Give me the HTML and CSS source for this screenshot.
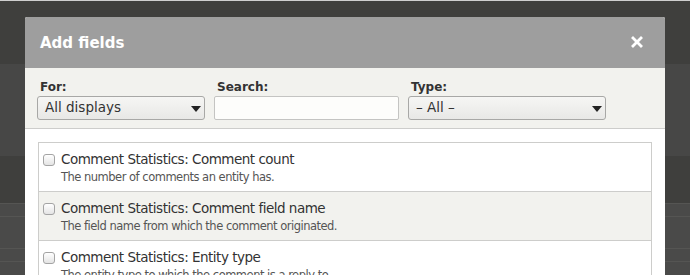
FILE: index.html
```html
<!DOCTYPE html>
<html lang="en">
<head>
  <meta charset="UTF-8" />
  <title>Add fields</title>
  <link rel="stylesheet" href="styles.css">
</head>
<body>
  <div class="page">
    <div class="band band-top"></div>
    <div class="band band-mid"></div>
    <div class="band band-low"></div>
    <div class="band band-rows">
      <div class="line"></div><div class="line"></div><div class="line"></div><div class="line"></div>
    </div>
  </div>

  <div class="dialog">
    <div class="titlebar">
      <span class="title">Add fields</span>
      <svg class="close" width="12" height="12" viewBox="0 0 12 12">
        <path d="M2 2 L10 10 M10 2 L2 10" stroke="#fff" stroke-width="2.8" stroke-linecap="square" />
      </svg>
    </div>
    <div class="filters">
      <div class="filter">
        <label>For:</label>
        <div class="select sel-for">All displays<span class="arrow"></span></div>
      </div>
      <div class="filter">
        <label>Search:</label>
        <div class="search"></div>
      </div>
      <div class="filter">
        <label>Type:</label>
        <div class="select sel-type">&ndash; All &ndash;<span class="arrow"></span></div>
      </div>
    </div>
    <div class="content">
      <div class="fields">
        <div class="row">
          <span class="check"></span>
          <div>
            <div class="name">Comment Statistics: Comment count</div>
            <div class="desc">The number of comments an entity has.</div>
          </div>
        </div>
        <div class="row even">
          <span class="check"></span>
          <div>
            <div class="name">Comment Statistics: Comment field name</div>
            <div class="desc">The field name from which the comment originated.</div>
          </div>
        </div>
        <div class="row">
          <span class="check"></span>
          <div>
            <div class="name">Comment Statistics: Entity type</div>
            <div class="desc">The entity type to which the comment is a reply to.</div>
          </div>
        </div>
      </div>
    </div>
  </div>
</body>
</html>
```

FILE: styles.css
```css
html, body { margin: 0; height: 100%; overflow: hidden; }
body {
  font-family: "DejaVu Sans", Verdana, sans-serif;
  background: #4a4a49;
  border-top: 1px solid #cfcfcf;
  position: relative;
}
.page { display: flex; flex-direction: column; }
.band-top { height: 63px; background: #3f3f3d; }
.band-mid { height: 92px; background: #474746; }
.band-low { height: 47px; background: #3f3f3d; }
.band-rows { background: #4a4a49; }
.line { height: 12px; border-top: 1px solid #555553; }
.line:nth-child(2) { height: 31px; }

.dialog {
  position: absolute;
  left: 25px; top: 16px;
  width: 640px; height: 300px;
  background: #fff;
  border-radius: 2px 2px 0 0;
}
.titlebar {
  height: 51px;
  background: #9e9e9e;
  display: flex;
  align-items: center;
  justify-content: space-between;
  padding: 0 22px 0 15px;
  color: #fff;
  border-radius: 2px 2px 0 0;
}
.title { font-weight: bold; font-size: 15px; }
.close { display: block; margin-top: -2px; }

.filters {
  background: #f2f2ee;
  border-bottom: 1px solid #cdcdcb;
  height: 60px;
  display: flex;
  gap: 9px;
  padding: 0 0 0 12px;
}
.filter { display: flex; flex-direction: column; padding-top: 12px; }
.filter label {
  font-size: 12px;
  font-weight: bold;
  color: #333;
  padding-left: 3px;
  height: 16px;
}
.select {
  box-sizing: border-box;
  height: 24px;
  border: 1px solid #a8a8a6;
  border-radius: 3px;
  background: linear-gradient(#f6f6f4, #e8e8e6);
  font-size: 13.5px;
  color: #333;
  padding: 2px 0 0 7px;
  position: relative;
}
.sel-for { width: 168px; }
.sel-type { width: 198px; }
.arrow {
  position: absolute;
  right: 3px; top: 9px;
  border-left: 5px solid transparent;
  border-right: 5px solid transparent;
  border-top: 6px solid #222;
}
.search {
  box-sizing: border-box;
  width: 185px;
  height: 24px;
  border: 1px solid #c4c4c2;
  border-radius: 2px;
  background: #fdfdfb;
}

.content { padding: 13px 13px 0 13px; }
.fields { border: 1px solid #cdcdcb; border-bottom: none; }
.row {
  display: flex;
  align-items: flex-start;
  gap: 6px;
  height: 49px;
  border-bottom: 1px solid #cdcdcb;
  padding: 8px 0 0 4px;
  box-sizing: border-box;
}
.row.even { background: #f2f2ee; }
.check {
  width: 10px; height: 10px;
  margin-top: 3px;
  border: 1px solid #a4a4a4;
  border-radius: 3px;
  background: linear-gradient(#fff, #e4e4e4);
}
.name { font-size: 13.5px; letter-spacing: -0.5px; color: #333; }
.desc { font-size: 11.5px; letter-spacing: -0.5px; color: #555; margin-top: 3px; }
```
